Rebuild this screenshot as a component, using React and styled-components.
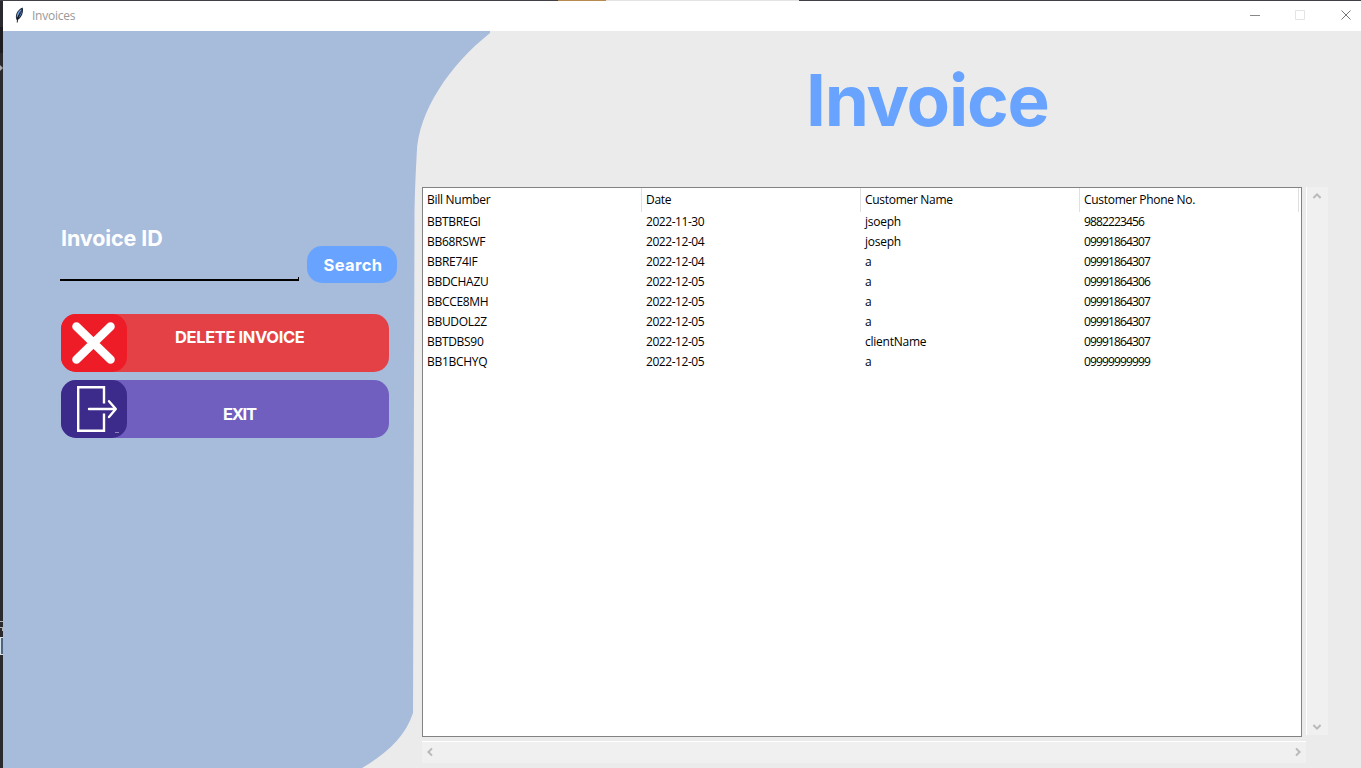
import React from "react";
import styled, { createGlobalStyle } from "styled-components";

const Global = createGlobalStyle`
  * { box-sizing: border-box; }
  body { margin: 0; overflow: hidden; background: #29292e; }
  button { border: 0; padding: 0; font: inherit; color: inherit; text-align: left; }
`;

const Desktop = styled.div`
  width: 1361px;
  height: 768px;
  display: grid;
  grid-template: 1px 767px / 3px 1358px;
  background: #29292e;
  overflow: hidden;
`;
const TopEdge = styled.div`
  grid-column: 1 / 3;
  background: linear-gradient(90deg, #424045 558px, #b98a50 558px 606px, #e4e4e4 606px 799px, #424045 799px);
`;
const LeftEdge = styled.svg`
  width: 3px;
  height: 767px;
  display: block;
`;
const Window = styled.div`
  display: flex;
  flex-direction: column;
  background: #ebebeb;
`;
const TitleBar = styled.header`
  height: 30px;
  background: #fff;
  display: flex;
  align-items: center;
  padding-left: 9px;
  font: 12px/30px "Open Sans", sans-serif;
  color: #999;
`;
const Feather = styled.svg`
  width: 14px;
  height: 18px;
  margin: 0 6px 2px 0;
`;
const WindowTitle = styled.span`
  flex: 1;
  letter-spacing: -0.25px;
`;
const Controls = styled.svg`
  width: 141px;
  height: 30px;
`;
const Body = styled.main`
  flex: 1;
  display: flex;
  position: relative;
`;
const Wave = styled.svg`
  position: absolute;
  left: 0;
  top: 0;
  width: 490px;
  height: 737px;
`;
const Sidebar = styled.section`
  position: relative;
  width: 419px;
  padding: 194px 0 0 57px;
  font-family: Inter, sans-serif;
  color: #fff;
`;
const SearchRow = styled.div`
  display: flex;
  justify-content: space-between;
  width: 337px;
  height: 58px;
`;
const Field = styled.label`
  width: 239px;
  height: 56px;
  border-bottom: 2px solid #000;
  padding-left: 1px;
  font-size: 21.5px;
  line-height: 27px;
  font-weight: 700;
  letter-spacing: -0.1px;
  background: linear-gradient(#000, #000) right bottom / 1px 2px no-repeat;
`;
const SearchButton = styled.button`
  width: 90px;
  height: 37px;
  margin-top: 21px;
  border-radius: 15px;
  background: #68a4ff;
  font-size: 16.5px;
  line-height: 39px;
  font-weight: 700;
  letter-spacing: 0.4px;
  text-align: center;
  padding-left: 2px;
`;
const Actions = styled.div`
  display: flex;
  flex-direction: column;
  gap: 8px;
  margin: 31px 0 0 1px;
`;
const ActionButton = styled.button`
  display: flex;
  width: 328px;
  height: 58px;
  border-radius: 15px;
  background: ${(p) => p.$bg};
`;
const ActionIcon = styled.svg`
  width: 66px;
  height: 58px;
  border-radius: 15px;
  background: ${(p) => p.$bg};
`;
const ActionLabel = styled.span`
  margin: ${(p) => p.$top}px 0 0 ${(p) => p.$left}px;
  font-size: 16.5px;
  line-height: 20px;
  font-weight: 700;
  letter-spacing: ${(p) => p.$spacing}px;
  white-space: nowrap;
`;
const Content = styled.section`
  position: relative;
  width: 939px;
`;
const Heading = styled.h1`
  height: 156px;
  margin: 0;
  padding: 25px 0 0 384px;
  font: 700 71px/88px Inter, sans-serif;
  letter-spacing: -1.2px;
  color: #68a4ff;
`;
const TableArea = styled.div`
  display: grid;
  grid-template-columns: 880px 22px;
  grid-template-rows: 550px 22px;
  column-gap: 4px;
  row-gap: 4px;
`;
const Table = styled.div`
  border: 1px solid #828282;
  background: #fff;
  font: 12px/20px "Open Sans", sans-serif;
  color: #000;
`;
const HeadRow = styled.div`
  display: grid;
  grid-template-columns: repeat(4, 219px);
  height: 24px;
  line-height: 24px;
`;
const HeadCell = styled.div`
  padding-left: 4px;
  border-right: 1px solid #e0e0e0;
  letter-spacing: ${(p) => p.$spacing}px;
`;
const Row = styled.div`
  display: grid;
  grid-template-columns: repeat(4, 219px);
  height: 20px;
`;
const Cell = styled.div`
  padding-left: 4px;
  letter-spacing: ${(p) => p.$spacing}px;
`;
const VerticalBar = styled.div`
  display: flex;
  flex-direction: column;
  justify-content: space-between;
  align-items: center;
  height: 548px;
  padding: 3px 2px 2px 0;
  background: #f0f0f0;
  border-left: 1px solid #fff;
`;
const HorizontalBar = styled.div`
  display: flex;
  justify-content: space-between;
  align-items: center;
  width: 884px;
  padding: 0 2px 2px;
  background: #f0f0f0;
  border-top: 1px solid #fff;
`;
const Arrow = styled.svg`
  width: 12px;
  height: 12px;
  transform: rotate(${(p) => p.$turn}deg);
`;

const columns = [
  { name: "Bill Number", head: -0.28, cell: -0.3 },
  { name: "Date", head: -0.28, cell: -0.45 },
  { name: "Customer Name", head: -0.3, cell: -0.25 },
  { name: "Customer Phone No.", head: -0.3, cell: -0.86 },
];
const invoices = [
  ["BBTBREGI", "2022-11-30", "jsoeph", "9882223456"],
  ["BB68RSWF", "2022-12-04", "joseph", "09991864307"],
  ["BBRE74IF", "2022-12-04", "a", "09991864307"],
  ["BBDCHAZU", "2022-12-05", "a", "09991864306"],
  ["BBCCE8MH", "2022-12-05", "a", "09991864307"],
  ["BBUDOL2Z", "2022-12-05", "a", "09991864307"],
  ["BBTDBS90", "2022-12-05", "clientName", "09991864307"],
  ["BB1BCHYQ", "2022-12-05", "a", "09999999999"],
];

function Chevron({ turn }) {
  return (
    <Arrow $turn={turn} viewBox="0 0 12 12">
      <path d="M2.4 8 6 4.4 9.6 8" fill="none" stroke="#b9b9b9" strokeWidth="2" />
    </Arrow>
  );
}

export default function App() {
  return (
    <>
      <Global />
      <Desktop>
        <TopEdge />
        <LeftEdge viewBox="0 0 3 767">
          <path d="M0 27H3M0 29H3M0 31H3M0 33H3M0 35H3M0 37H3M0 39H3M0 41H3M0 43H3M0 45H3M0 47H3M0 49H3M0 51H3" stroke="#111114" />
          <path d="M0 64 3 67 0 70Z" fill="#aaa" />
          <path d="M0 620.5H3M0 626.5H3M2.5 626V630" stroke="#aeb0b4" />
          <path d="M0 636.5H3M0 653.5H3" stroke="#d5e2ee" />
          <path d="M0 637H1V653H0Z" fill="#d5e2ee" />
          <path d="M1 637H3V653H1Z" fill="#4d6680" />
        </LeftEdge>
        <Window>
          <TitleBar>
            <Feather viewBox="0 0 14 18">
              <path d="M4.8 14.2C2.4 10.5 4.8 4 10.6 1.6 11.8 5.6 10.2 11 6.2 13.6Z" fill="#16202f" />
              <path d="M4.8 11.8C4.4 7.8 6.5 4.4 9.6 2.9 9.4 6 7.5 8.6 4.8 11.8Z" fill="#6f9fe0" />
              <path d="M6.2 12.2C8.6 10.2 10 7.5 10.3 4.4Z" fill="#5282c4" />
              <path d="M8.6 5.5C7 8.5 5.6 11.5 5.2 16.5" fill="none" stroke="#111" strokeWidth="0.9" />
            </Feather>
            <WindowTitle>Invoices</WindowTitle>
            <Controls viewBox="0 0 141 30" fill="none">
              <path d="M30 14.5H40" stroke="#888" />
              <path d="M75.5 9.5H84.5V18.5H75.5Z" stroke="#e4e4e4" />
              <path d="M121.5 9.5 130.5 18.5M130.5 9.5 121.5 18.5" stroke="#777" />
            </Controls>
          </TitleBar>
          <Body>
            <Wave viewBox="0 0 490 737">
              <path
                d="M0 0H487V2C447 34 415 80 413.7 123C412.6 145 411.8 160 411.5 190L410 682C403 704 385 722 359 737H0Z"
                fill="#a7bbdb"
              />
            </Wave>
            <Sidebar>
              <SearchRow>
                <Field>Invoice ID</Field>
                <SearchButton>Search</SearchButton>
              </SearchRow>
              <Actions>
                <ActionButton $bg="#e44147">
                  <ActionIcon $bg="#ed1c26" viewBox="0 0 66 58">
                    <path d="M15.5 12.5 49.5 45.5M49.5 12.5 15.5 45.5" stroke="#fff" strokeWidth="8.6" strokeLinecap="round" />
                  </ActionIcon>
                  <ActionLabel $left={48} $top={13} $spacing={-0.38}>DELETE INVOICE</ActionLabel>
                </ActionButton>
                <ActionButton $bg="#705fbf">
                  <ActionIcon $bg="#3c2b8a" viewBox="0 0 66 58">
                    <g fill="none" stroke="#fff" strokeWidth="2.4">
                      <path d="M43 23.5V7.2H17.2V50.8H43V33.5" />
                      <path d="M28 29H54.5M48 21.2 54.8 29 48 37" strokeLinecap="round" strokeLinejoin="round" />
                    </g>
                    <path d="M54 52.5H58" stroke="#8f85bd" />
                  </ActionIcon>
                  <ActionLabel $left={96} $top={24} $spacing={-1.3}>EXIT</ActionLabel>
                </ActionButton>
              </Actions>
            </Sidebar>
            <Content>
              <Heading>Invoice</Heading>
              <TableArea>
                <Table>
                  <HeadRow>
                    {columns.map((c) => (
                      <HeadCell key={c.name} $spacing={c.head}>{c.name}</HeadCell>
                    ))}
                  </HeadRow>
                  {invoices.map((row) => (
                    <Row key={row[0]}>
                      {row.map((value, i) => (
                        <Cell key={i} $spacing={columns[i].cell}>{value}</Cell>
                      ))}
                    </Row>
                  ))}
                </Table>
                <VerticalBar>
                  <Chevron turn={0} />
                  <Chevron turn={180} />
                </VerticalBar>
                <HorizontalBar>
                  <Chevron turn={-90} />
                  <Chevron turn={90} />
                </HorizontalBar>
              </TableArea>
            </Content>
          </Body>
        </Window>
      </Desktop>
    </>
  );
}
